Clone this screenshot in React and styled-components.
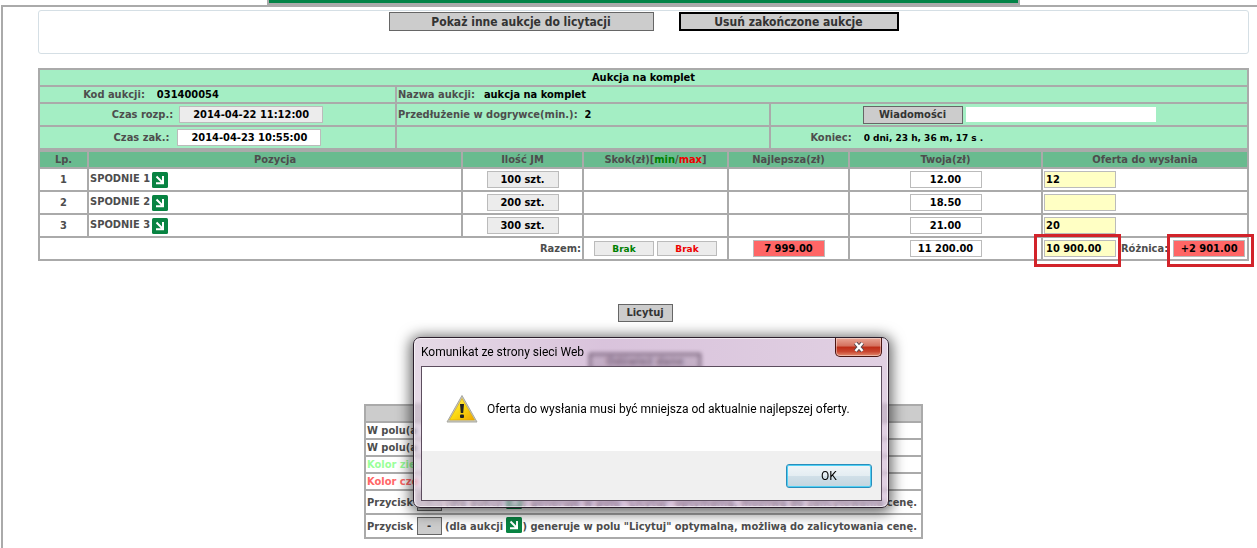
import styled, { createGlobalStyle } from 'styled-components';

const GlobalStyle = createGlobalStyle`
  *,
  *::after {
    box-sizing: border-box;
  }
  body {
    margin: 0;
    background: #fff;
    color: #4d4d4d;
    font-family: 'DejaVu Sans Condensed', 'DejaVu Sans', sans-serif;
    font-size: 11px;
    font-weight: 700;
    overflow: hidden;
  }
`;

const Header = styled.header`
  height: 5px;
  margin: 0 237px 0 267px;
  background: #028346;
  border: solid #aaa;
  border-width: 0 2px 2px;
`;

const Page = styled.main`
  min-height: 100vh;
  margin-left: 1px;
  padding: 3px 8px 0 35px;
  border: solid #aaa;
  border-width: 2px 0 0 2px;
`;

const TopBar = styled.div`
  display: flex;
  justify-content: center;
  align-items: flex-start;
  gap: 25px;
  height: 44px;
  padding-top: 1px;
  margin-bottom: 14px;
  border: 1px solid #d5dfe5;
  border-radius: 3px;
`;

const Button = styled.button`
  width: ${(p) => p.$width}px;
  height: ${(p) => (p.$large ? 19 : 18)}px;
  padding: 0;
  border: ${(p) => (p.$focused ? '2px solid #000' : '1px solid #666')};
  background: #ccc;
  color: #333;
  font: inherit;
  font-size: ${(p) => (p.$large ? 12 : 11)}px;
  line-height: 14px;
`;

const Table = styled.table`
  width: 100%;
  table-layout: fixed;
  border-collapse: collapse;
`;

const Row = styled.tr`
  height: ${(p) => (p.$tall ? 23 : 17)}px;
`;

const Cell = styled.td`
  padding: 0 1px;
  border: 2px solid #aaa;
  background: ${(p) => p.$bg || '#fff'};
  text-align: ${(p) => p.$align || 'center'};
  line-height: 13px;
  white-space: nowrap;
`;

const HeadCell = styled.th`
  padding: 0;
  border: 2px solid #aaa;
  background: #69bb8f;
  line-height: 13px;
  white-space: nowrap;
`;

const Title = styled.span`
  color: #000;
`;

const Colored = styled.span`
  color: ${(p) => p.$color};
`;

const Line = styled.div`
  display: flex;
  justify-content: ${(p) => p.$justify || 'center'};
  align-items: center;
  gap: ${(p) => p.$gap || 0}px;
`;

const Field = styled.input`
  width: ${(p) => p.$width || 72}px;
  height: ${(p) => p.$height || 17}px;
  padding: 0 1px;
  border: 1px solid #bbb;
  background: ${(p) => p.$bg || '#fff'};
  color: ${(p) => p.$color || '#000'};
  font: inherit;
  text-align: ${(p) => p.$align || 'center'};
`;

const PlainField = styled(Field)`
  height: 15px;
  border: 0;
  background: ${(p) => p.$bg || 'transparent'};
`;

const SmallField = styled(Field)`
  font-family: 'DejaVu Sans', sans-serif;
  font-size: 9px;
`;

const Timer = styled(PlainField)`
  font-family: 'DejaVu Sans', sans-serif;
  font-size: 9px;
`;

const Marked = styled.span`
  position: relative;
  display: flex;

  &::after {
    content: '';
    position: absolute;
    top: -6px;
    left: ${(p) => p.$left}px;
    width: 87px;
    height: 33px;
    border: 3px solid #d2232a;
    pointer-events: none;
  }
`;

const Item = styled.div`
  display: flex;
  align-items: flex-start;
  gap: 2px;
`;

const Actions = styled.div`
  display: flex;
  flex-direction: column;
  align-items: center;
  gap: 31px;
  padding: 43px 0 33px 3px;
`;

const Legend = styled.div`
  width: 559px;
  margin: 0 auto;
`;

const LegendRow = styled.tr`
  height: ${(p) => (p.$tall ? 24 : 17)}px;
`;

const LegendLine = styled.div`
  display: flex;
  align-items: center;
  white-space: pre;

  svg {
    align-self: flex-start;
  }
`;

const Dialog = styled.section`
  position: absolute;
  top: 337px;
  left: 413px;
  width: 476px;
  padding: 0 6px 6px 7px;
  border: 1px solid #2b1f2c;
  border-radius: 7px;
  background: linear-gradient(90deg, rgba(209, 187, 209, 0.55), rgba(186, 146, 191, 0.55) 40%, rgba(200, 170, 203, 0.55));
  backdrop-filter: blur(2px);
  box-shadow: 0 2px 14px 3px rgba(0, 0, 0, 0.6), inset 0 0 0 1px rgba(255, 255, 255, 0.6);
  color: #000;
  font-family: Roboto, sans-serif;
  font-size: 12px;
  font-weight: 400;
`;

const DialogTitle = styled.div`
  display: flex;
  justify-content: space-between;
  align-items: flex-start;
  height: 28px;
  line-height: 28px;
`;

const Close = styled.button`
  display: flex;
  justify-content: center;
  align-items: center;
  width: 47px;
  height: 19px;
  padding: 0;
  border: 1px solid #4b1512;
  border-top: 0;
  border-radius: 0 0 5px 5px;
  background: linear-gradient(#e9a595, #d4705d 45%, #bd2c16 50%, #c9452f 75%, #e38b70);
  box-shadow: inset 0 0 0 1px rgba(255, 255, 255, 0.4);
`;

const DialogBody = styled.div`
  border: 1px solid #5c4d5e;
  background: #fff;
`;

const Message = styled.div`
  display: flex;
  align-items: center;
  gap: 9px;
  height: 84px;
  padding-left: 24px;
`;

const DialogFooter = styled.div`
  display: flex;
  justify-content: flex-end;
  padding: 13px 9px 12px;
  background: #f0f0f0;
`;

const OkButton = styled.button`
  width: 86px;
  height: 24px;
  border: 1px solid #2a8dbb;
  border-radius: 3px;
  background: linear-gradient(#f0f5f8, #e4edf2 48%, #d0dfe8 52%, #c3d5df);
  box-shadow: inset 0 0 0 1px #4fd0f5;
  font: inherit;
`;

const ArrowIcon = () => (
  <svg width='16' height='16' viewBox='0 0 16 16' aria-hidden='true'>
    <rect width='16' height='16' rx='1.5' fill='#088342' />
    <path d='M4.5 4.5L10.5 10.5M11 4v7.2H4' fill='none' stroke='#fff' strokeWidth='2' />
  </svg>
);

const WarningIcon = () => (
  <svg width='32' height='30' viewBox='0 0 32 30' aria-hidden='true'>
    <defs>
      <linearGradient id='warn' x1='0' y1='0' x2='1' y2='1'>
        <stop offset='0' stopColor='#fff27a' />
        <stop offset='0.5' stopColor='#fbd911' />
        <stop offset='1' stopColor='#f0a500' />
      </linearGradient>
    </defs>
    <path d='M16 1.5L31 28H1z' fill='#c9c9c0' stroke='#a8a8a0' strokeLinejoin='round' />
    <path d='M16 4.5L28.5 26H3.5z' fill='url(#warn)' stroke='#d8a800' strokeWidth='0.6' />
    <path d='M14 10h4l-.8 9h-2.4z' fill='#222' />
    <rect x='14' y='20.5' width='4' height='3.5' rx='1' fill='#222' />
  </svg>
);

const CloseIcon = () => (
  <svg width='12' height='10' viewBox='0 0 12 10' aria-hidden='true'>
    <path d='M2.5 1L9.5 9M9.5 1L2.5 9' stroke='#5a4a50' strokeWidth='4.2' />
    <path d='M2.5 1L9.5 9M9.5 1L2.5 9' stroke='#fff' strokeWidth='2.4' />
  </svg>
);

const MINT = '#a4eec4';
const GRAY = '#ececec';
const YELLOW = '#ffffc4';
const RED = '#ff6666';

const items = [
  { name: 'SPODNIE 1', amount: '100 szt.', mine: '12.00', offer: '12' },
  { name: 'SPODNIE 2', amount: '200 szt.', mine: '18.50', offer: '' },
  { name: 'SPODNIE 3', amount: '300 szt.', mine: '21.00', offer: '20' },
];

const AuctionInfo = () => (
  <Table>
    <colgroup>
      <col style={{ width: 357 }} />
      <col style={{ width: 374 }} />
      <col />
    </colgroup>
    <tbody>
      <Row>
        <Cell $bg={MINT} colSpan={3}>
          <Title>Aukcja na komplet</Title>
        </Cell>
      </Row>
      <Row>
        <Cell $bg={MINT}>
          <Line $gap={11}>
            <label htmlFor='code'>Kod aukcji:</label>
            <PlainField id='code' $width={196} $align='left' defaultValue='031400054' />
          </Line>
        </Cell>
        <Cell $bg={MINT} $align='left' colSpan={2}>
          <Line $gap={8} $justify='flex-start'>
            <label htmlFor='name'>Nazwa aukcji:</label>
            <PlainField id='name' $width={200} $align='left' defaultValue='aukcja na komplet' />
          </Line>
        </Cell>
      </Row>
      <Row $tall>
        <Cell $bg={MINT}>
          <Line $gap={6}>
            <label htmlFor='start'>Czas rozp.:</label>
            <Field id='start' $width={144} $bg={GRAY} defaultValue='2014-04-22 11:12:00' />
          </Line>
        </Cell>
        <Cell $bg={MINT} $align='left'>
          <Line $gap={6} $justify='flex-start'>
            <label htmlFor='extra'>Przedłużenie w dogrywce(min.):</label>
            <PlainField id='extra' $width={60} $align='left' defaultValue='2' />
          </Line>
        </Cell>
        <Cell $bg={MINT}>
          <Line $gap={3}>
            <Button $width={100}>Wiadomości</Button>
            <PlainField $width={190} $bg='#fff' aria-label='Wiadomości' />
          </Line>
        </Cell>
      </Row>
      <Row $tall>
        <Cell $bg={MINT}>
          <Line $gap={8}>
            <label htmlFor='end'>Czas zak.:</label>
            <Field id='end' $width={144} defaultValue='2014-04-23 10:55:00' />
          </Line>
        </Cell>
        <Cell $bg={MINT} />
        <Cell $bg={MINT}>
          <Line $gap={11}>
            <label htmlFor='left'>Koniec:</label>
            <Timer id='left' $width={345} $align='left' defaultValue='0 dni, 23 h, 36 m, 17 s .' />
          </Line>
        </Cell>
      </Row>
    </tbody>
  </Table>
);

const OfferTable = () => (
  <Table>
    <colgroup>
      <col style={{ width: 49 }} />
      <col />
      <col style={{ width: 121 }} />
      <col style={{ width: 145 }} />
      <col style={{ width: 121 }} />
      <col style={{ width: 193 }} />
      <col style={{ width: 206 }} />
    </colgroup>
    <thead>
      <Row>
        <HeadCell>Lp.</HeadCell>
        <HeadCell>Pozycja</HeadCell>
        <HeadCell>Ilość JM</HeadCell>
        <HeadCell>
          Skok(zł)[<Colored $color='#008000'>min</Colored>/<Colored $color='#e00'>max</Colored>]
        </HeadCell>
        <HeadCell>Najlepsza(zł)</HeadCell>
        <HeadCell>Twoja(zł)</HeadCell>
        <HeadCell>Oferta do wysłania</HeadCell>
      </Row>
    </thead>
    <tbody>
      {items.map((item, i) => (
        <Row $tall key={item.name}>
          <Cell>{i + 1}</Cell>
          <Cell $align='left'>
            <Item>
              {item.name}
              <ArrowIcon />
            </Item>
          </Cell>
          <Cell>
            <Line>
              <Field $bg={GRAY} aria-label='Ilość JM' defaultValue={item.amount} />
            </Line>
          </Cell>
          <Cell />
          <Cell />
          <Cell>
            <Line>
              <Field aria-label='Twoja(zł)' defaultValue={item.mine} />
            </Line>
          </Cell>
          <Cell>
            <Line $justify='flex-start'>
              <Field $bg={YELLOW} $align='left' aria-label='Oferta do wysłania' defaultValue={item.offer} />
            </Line>
          </Cell>
        </Row>
      ))}
      <Row $tall>
        <Cell $align='right' colSpan={3}>
          Razem:
        </Cell>
        <Cell>
          <Line $gap={3}>
            <SmallField $width={60} $height={15} $bg={GRAY} $color='#008000' aria-label='min' defaultValue='Brak' />
            <SmallField $width={60} $height={15} $bg={GRAY} $color='#e00' aria-label='max' defaultValue='Brak' />
          </Line>
        </Cell>
        <Cell>
          <Line>
            <Field $bg={RED} aria-label='Najlepsza(zł)' defaultValue='7 999.00' />
          </Line>
        </Cell>
        <Cell>
          <Line>
            <Field aria-label='Twoja(zł)' defaultValue='11 200.00' />
          </Line>
        </Cell>
        <Cell>
          <Line $gap={5} $justify='flex-start'>
            <Marked $left={-10}>
              <Field $bg={YELLOW} $align='left' aria-label='Razem' defaultValue='10 900.00' />
            </Marked>
            <label htmlFor='diff'>Różnica:</label>
            <Marked $left={-6}>
              <Field id='diff' $bg={RED} defaultValue='+2 901.00' />
            </Marked>
          </Line>
        </Cell>
      </Row>
    </tbody>
  </Table>
);

const LegendTable = () => (
  <Legend>
    <Table>
      <tbody>
        <LegendRow>
          <Cell $bg='#ccc' />
        </LegendRow>
        <LegendRow>
          <Cell $align='left'>W polu(a</Cell>
        </LegendRow>
        <LegendRow>
          <Cell $align='left'>W polu(a</Cell>
        </LegendRow>
        <LegendRow>
          <Cell $align='left'>
            <Colored $color='#99ff99'>Kolor zie</Colored>
          </Cell>
        </LegendRow>
        <LegendRow>
          <Cell $align='left'>
            <Colored $color={RED}>Kolor cze</Colored>
          </Cell>
        </LegendRow>
        {[0, 1].map((n) => (
          <LegendRow $tall key={n}>
            <Cell $align='left'>
              <LegendLine>
                {'Przycisk '}
                <Button $width={25}>-</Button>
                {' (dla aukcji '}
                <ArrowIcon />
                {') generuje w polu "Licytuj" optymalną, możliwą do zalicytowania cenę.'}
              </LegendLine>
            </Cell>
          </LegendRow>
        ))}
      </tbody>
    </Table>
  </Legend>
);

const App = () => {
  return (
    <>
      <GlobalStyle />
      <Header />
      <Page>
        <TopBar>
          <Button $large $width={265}>Pokaż inne aukcje do licytacji</Button>
          <Button $large $focused $width={220}>Usuń zakończone aukcje</Button>
        </TopBar>
        <AuctionInfo />
        <OfferTable />
        <Actions>
          <Button $width={55}>Licytuj</Button>
          <Button $focused $width={112}>Odśwież dane</Button>
        </Actions>
        <LegendTable />
      </Page>
      <Dialog role='alertdialog' aria-labelledby='dialog-title'>
        <DialogTitle>
          <span id='dialog-title'>Komunikat ze strony sieci Web</span>
          <Close aria-label='Zamknij'>
            <CloseIcon />
          </Close>
        </DialogTitle>
        <DialogBody>
          <Message>
            <WarningIcon />
            Oferta do wysłania musi być mniejsza od aktualnie najlepszej oferty.
          </Message>
          <DialogFooter>
            <OkButton>OK</OkButton>
          </DialogFooter>
        </DialogBody>
      </Dialog>
    </>
  );
};

export default App;
